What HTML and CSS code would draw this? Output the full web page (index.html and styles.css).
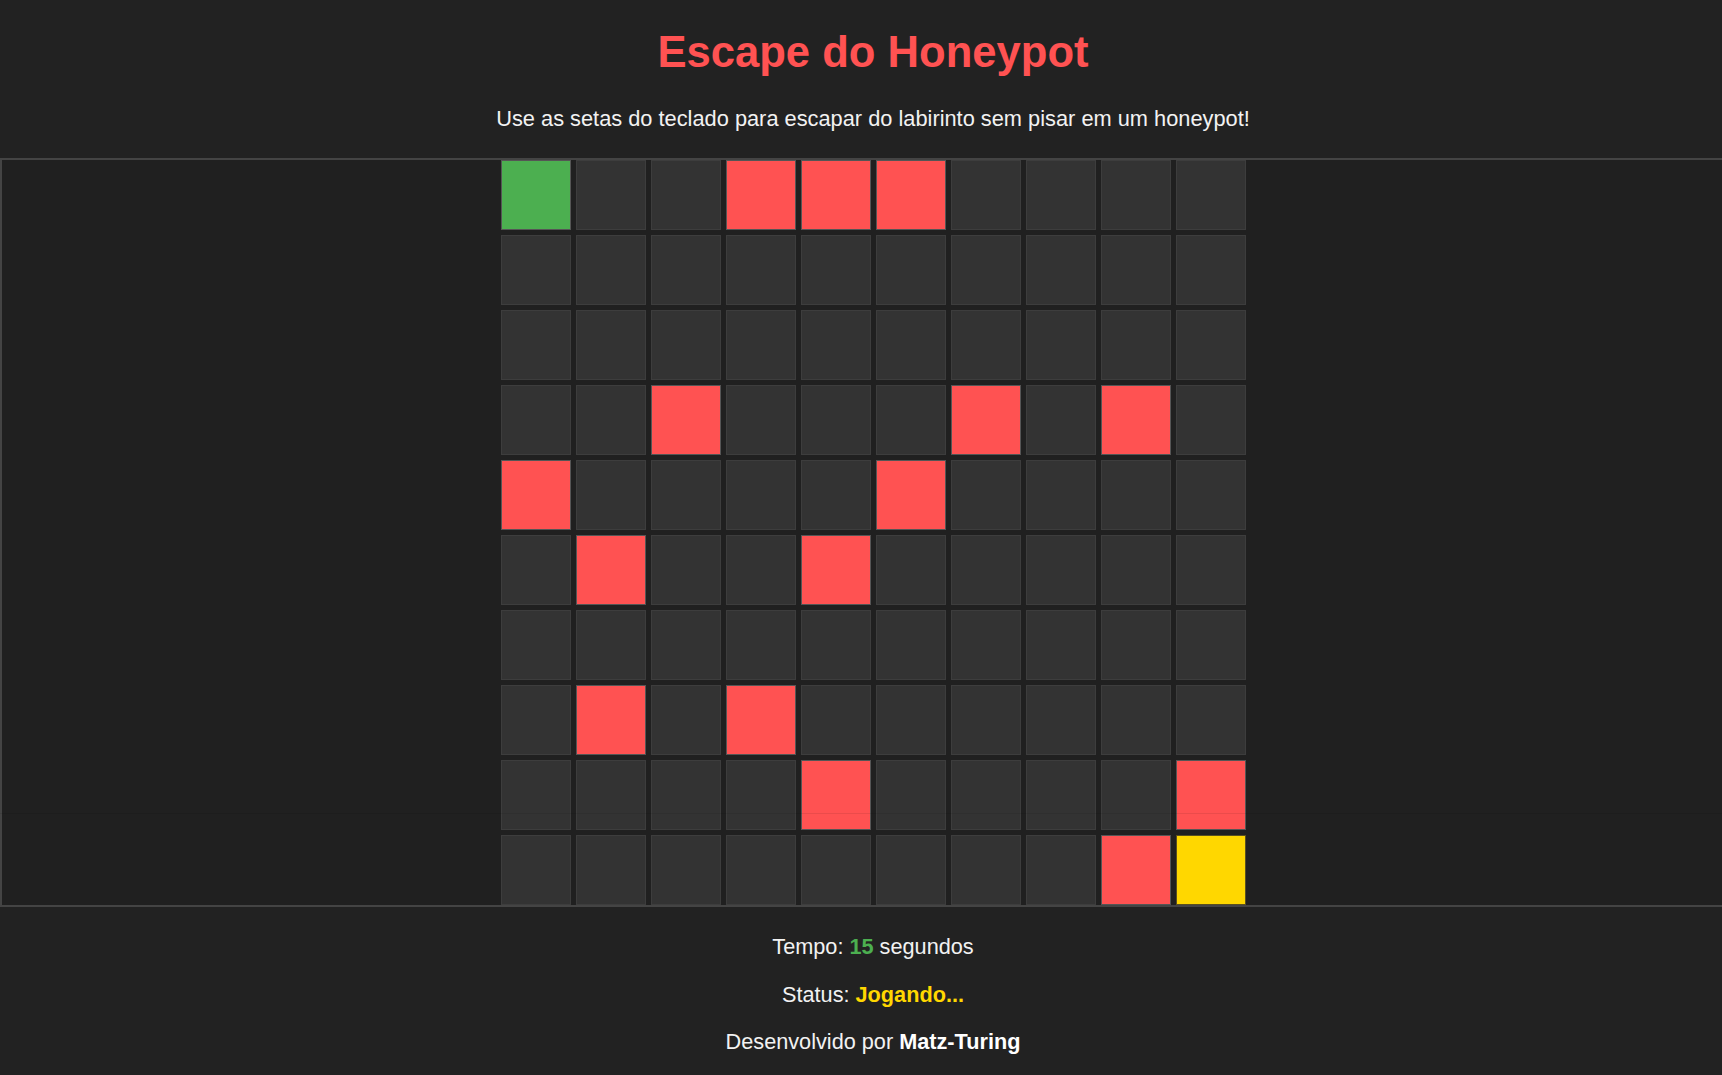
FILE: index.html
```html
<!DOCTYPE html>
<html lang="pt-BR">
<head>
<meta charset="utf-8">
<title>Escape do Honeypot</title>
<link rel="stylesheet" href="styles.css">
</head>
<body>
<div class="page">
<h1 class="title">Escape do Honeypot</h1>
<p class="subtitle">Use as setas do teclado para escapar do labirinto sem pisar em um honeypot!</p>
<div class="board">
  <div class="grid">
    <div class="cell player"></div><div class="cell"></div><div class="cell"></div><div class="cell trap"></div><div class="cell trap"></div><div class="cell trap"></div><div class="cell"></div><div class="cell"></div><div class="cell"></div><div class="cell"></div>
    <div class="cell"></div><div class="cell"></div><div class="cell"></div><div class="cell"></div><div class="cell"></div><div class="cell"></div><div class="cell"></div><div class="cell"></div><div class="cell"></div><div class="cell"></div>
    <div class="cell"></div><div class="cell"></div><div class="cell"></div><div class="cell"></div><div class="cell"></div><div class="cell"></div><div class="cell"></div><div class="cell"></div><div class="cell"></div><div class="cell"></div>
    <div class="cell"></div><div class="cell"></div><div class="cell trap"></div><div class="cell"></div><div class="cell"></div><div class="cell"></div><div class="cell trap"></div><div class="cell"></div><div class="cell trap"></div><div class="cell"></div>
    <div class="cell trap"></div><div class="cell"></div><div class="cell"></div><div class="cell"></div><div class="cell"></div><div class="cell trap"></div><div class="cell"></div><div class="cell"></div><div class="cell"></div><div class="cell"></div>
    <div class="cell"></div><div class="cell trap"></div><div class="cell"></div><div class="cell"></div><div class="cell trap"></div><div class="cell"></div><div class="cell"></div><div class="cell"></div><div class="cell"></div><div class="cell"></div>
    <div class="cell"></div><div class="cell"></div><div class="cell"></div><div class="cell"></div><div class="cell"></div><div class="cell"></div><div class="cell"></div><div class="cell"></div><div class="cell"></div><div class="cell"></div>
    <div class="cell"></div><div class="cell trap"></div><div class="cell"></div><div class="cell trap"></div><div class="cell"></div><div class="cell"></div><div class="cell"></div><div class="cell"></div><div class="cell"></div><div class="cell"></div>
    <div class="cell"></div><div class="cell"></div><div class="cell"></div><div class="cell"></div><div class="cell trap"></div><div class="cell"></div><div class="cell"></div><div class="cell"></div><div class="cell"></div><div class="cell trap"></div>
    <div class="cell"></div><div class="cell"></div><div class="cell"></div><div class="cell"></div><div class="cell"></div><div class="cell"></div><div class="cell"></div><div class="cell"></div><div class="cell trap"></div><div class="cell exit"></div>
  </div>
</div>
<p class="info">Tempo: <span class="time">15</span> segundos</p>
<p class="info">Status: <span class="status">Jogando...</span></p>
<p class="info">Desenvolvido por <strong class="author">Matz-Turing</strong></p>
</div>
<div class="fold-line"></div>
</body>
</html>
```

FILE: styles.css
```css
html, body {
  overflow-x: hidden;
}
body {
  margin: 0;
  background: #222222;
  color: #f2f2f2;
  font-family: "Liberation Sans", Arial, sans-serif;
  position: relative;
  min-height: 1075px;
}
.page {
  width: calc(100% + 24px);
  text-align: center;
  overflow: hidden;
}
.title {
  margin: 27px 0 0;
  font-size: 43.6px;
  line-height: 50px;
  font-weight: bold;
  color: #ff5252;
}
.subtitle {
  margin: 29px 0 0;
  font-size: 21.8px;
  line-height: 25px;
  color: #f2f2f2;
}
.board {
  box-sizing: border-box;
  margin: 27px 0 27px;
  width: 100%;
  border: 2px solid #444444;
  background: #202020;
  display: flex;
  justify-content: center;
}
.grid {
  display: grid;
  grid-template-columns: repeat(10, 70px);
  grid-auto-rows: 70px;
  gap: 5px;
}
.cell {
  box-sizing: border-box;
  background: #333333;
  border: 1px solid #3d3d3d;
}
.cell.trap {
  background: #ff5252;
  border-color: #555555;
}
.cell.player {
  background: #4caf50;
  border-color: #555555;
}
.cell.exit {
  background: #ffd700;
  border-color: #5a5020;
}
.info {
  margin: 22.5px 0;
  font-size: 21.7px;
  line-height: 25px;
  color: #f2f2f2;
}
.time {
  color: #4caf50;
  font-weight: bold;
}
.status {
  color: #ffd700;
  font-weight: bold;
}
.author {
  color: #ffffff;
  font-weight: bold;
}
.fold-line {
  position: absolute;
  left: 0;
  right: 0;
  top: 813px;
  height: 1px;
  background: rgba(0, 0, 0, 0.08);
}
```
